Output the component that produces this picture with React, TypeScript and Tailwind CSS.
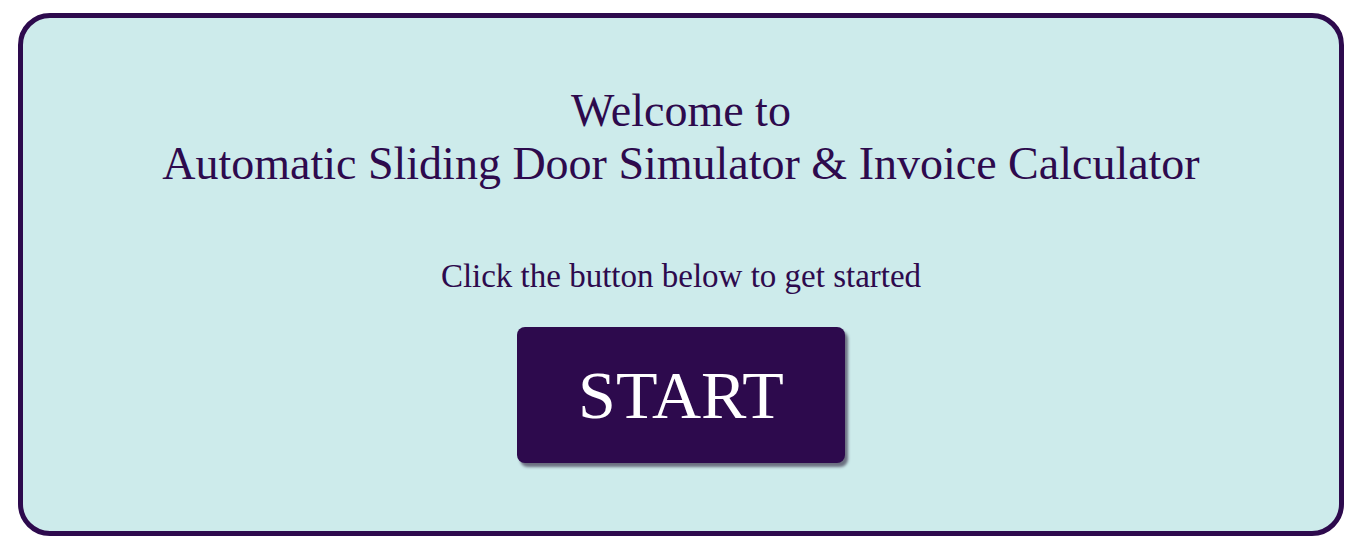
export default function App() {
  return (
    <div className="w-[1361px] h-[548px] bg-white pt-[13px] pl-[18px] font-['Liberation_Serif',serif]">
      <div className="w-[1326px] h-[523px] rounded-[32px] border-[5px] border-[#2d0a4d] bg-[#cdebeb] flex flex-col items-center text-[#2d0a4d]">
        <h1 className="mt-[66px] text-center text-[46px] leading-[53px]">
          Welcome to
          <br />
          Automatic Sliding Door Simulator &amp; Invoice Calculator
        </h1>
        <p className="mt-[67px] text-[33px] leading-[38px]">Click the button below to get started</p>
        <button className="mt-[32px] w-[328px] h-[136px] rounded-[8px] bg-[#2d0a4d] text-white text-[68px] shadow-[3px_4px_3px_#6b6f80]">
          START
        </button>
      </div>
    </div>
  );
}
